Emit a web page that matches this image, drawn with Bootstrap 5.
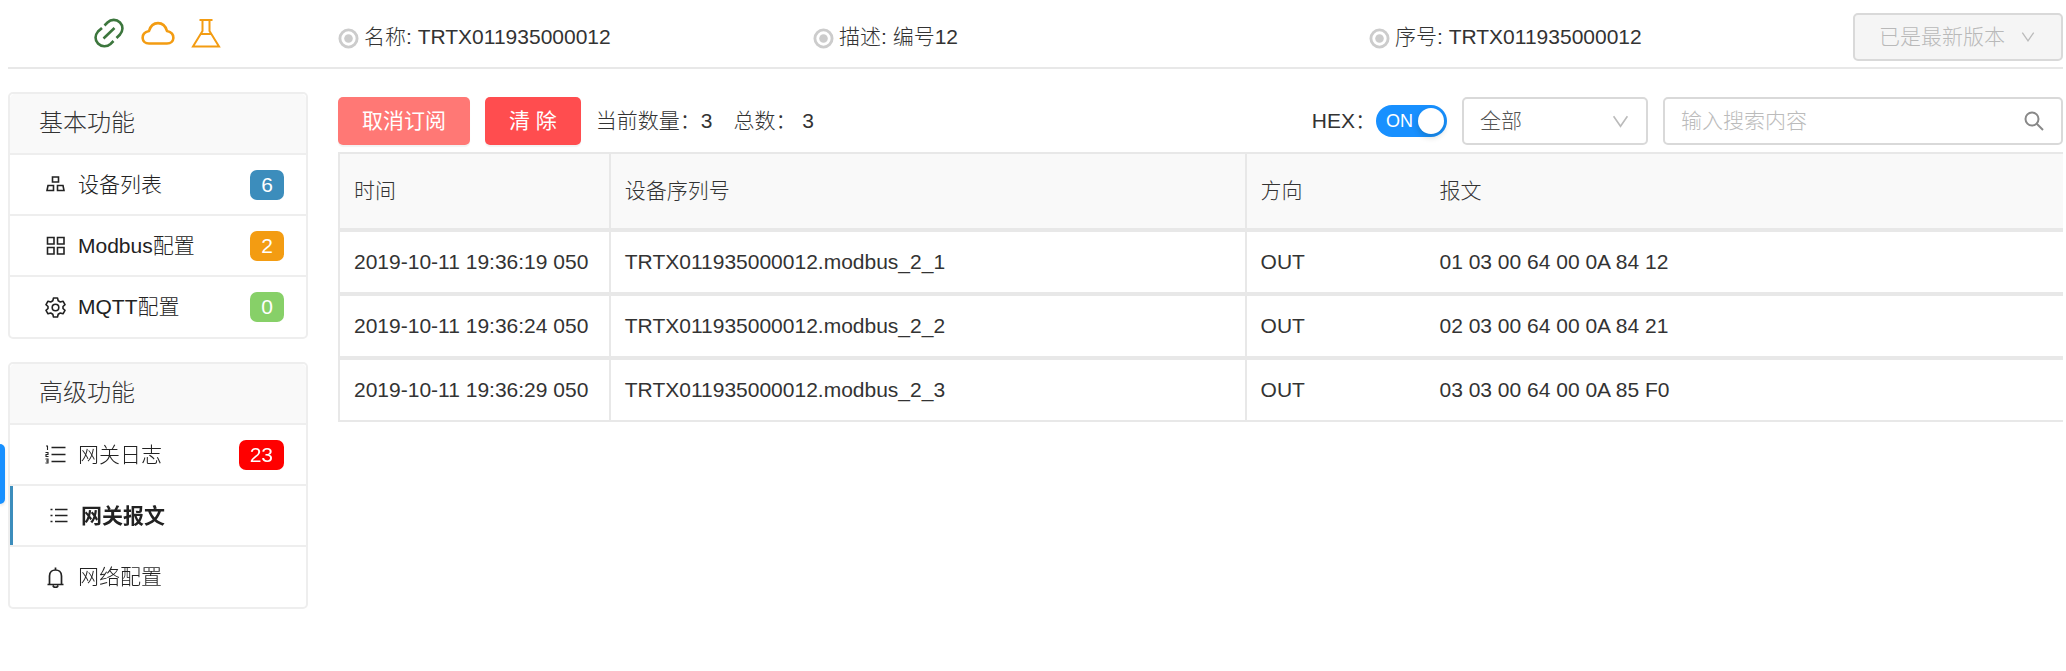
<!DOCTYPE html>
<html lang="zh-CN">
<head>
<meta charset="utf-8">
<meta name="viewport" content="width=device-width, initial-scale=1">
<title>网关报文</title>
<link href="https://cdn.jsdelivr.net/npm/bootstrap@5.3.0/dist/css/bootstrap.min.css" rel="stylesheet">
<style>
  body { font-family: "Liberation Sans", "Noto Sans CJK SC", sans-serif; font-size: 21px; font-weight: 300; line-height: 32px; color: #333; background: #fff; }
  .shell { padding: 0 3px 24px 8px; }
  .side { width: 300px; flex: none; }
  .topbar { height: 69px; border-bottom: 2px solid #e8e8e8; column-gap: 30px; }
  .status { gap: 16px; padding: 0 2px 2px 0; }
  .facts { display: grid; grid-template-columns: 475fr 556fr 694fr; padding-top: 7px; }
  .fact svg { margin: 3px 5px 0 0; }
  .workspace { column-gap: 30px; padding-top: 23px; }
  .btn { font-size: 21px; line-height: 32px; font-weight: 300; padding: 6px 22px; border: 2px solid transparent; border-radius: 5px; white-space: nowrap; }
  .btn-version, .btn-version:disabled { color: #b9b9b9; background: #f5f5f5; border-color: #d9d9d9; opacity: 1; padding: 6px 26px 6px 24px; height: 48px; }
  .btn-cancel, .btn-clear { color: #fff; height: 48px; font-weight: 400; box-shadow: 0 2px 1px rgba(0,0,0,.05); }
  .btn-cancel, .btn-cancel:hover { background: #ff7875; color: #fff; }
  .btn-clear, .btn-clear:hover { background: #ff4d4f; color: #fff; }
  .menu { --bs-card-border-color: #eee; --bs-card-border-width: 2px; --bs-card-border-radius: 5px; --bs-card-cap-bg: #f9f9f9; margin-bottom: 23px; overflow: hidden; }
  .menu .card-header { height: 61px; font-size: 24px; line-height: 32px; padding: 13px 29px; color: #333; }
  .menu .list-group-item { --bs-list-group-border-color: #eee; height: 61px; border-width: 0 0 2px; padding: 0 22px 0 35px; color: #222; display: flex; align-items: center; }
  .menu .list-group-item:last-child { border-bottom: 0; height: 60px; }
  .menu .list-group-item svg { margin-right: 12px; flex: none; }
  .menu .current { background: #fff; font-weight: 700; box-shadow: inset 3px 0 #3c8dbc; padding-left: 38px; }
  .count { min-width: 33px; height: 30px; border-radius: 7px; font-size: 21px; line-height: 30px; font-weight: 400; padding: 0 11px; text-align: center; color: #fff; }
  .c-blue { background: #3c8dbc; } .c-amber { background: #f39c12; } .c-green { background: #87d068; } .c-red { background: #f00; }
  .tools { height: 60px; padding-bottom: 3px; gap: 15px; }
  .tally { margin-right: 6px; }
  .switch-wrap { width: 71px; height: 32px; position: relative; }
  .switch-wrap .form-check-input { width: 71px; height: 32px; margin: 0; border: 0; border-radius: 16px; background: #bfbfbf; appearance: none; cursor: pointer; }
  .switch-wrap .form-check-input:checked { background: #1890ff; }
  .switch-wrap::after { content: ""; position: absolute; right: 3px; top: 3px; width: 26px; height: 26px; border-radius: 50%; background: #fff; box-shadow: 0 3px 6px rgba(0,35,11,.2); pointer-events: none; }
  .switch-wrap span { position: absolute; left: 10px; top: 0; line-height: 33px; font-size: 18px; color: #fff; pointer-events: none; }
  .picker { width: 186px; position: relative; }
  .finder { width: 400px; position: relative; }
  .picker select, .finder input { appearance: none; height: 48px; font-size: 21px; font-weight: 300; border: 2px solid #d9d9d9; border-radius: 5px; padding: 6px 16px; color: #555; background: #fff; }
  .finder input::placeholder { color: #bbb; }
  .picker svg { position: absolute; right: 19px; top: 16px; pointer-events: none; }
  .finder svg { position: absolute; right: 18px; top: 13px; }
  .log { border-collapse: separate; border-spacing: 0; table-layout: fixed; margin: 0; color: #333; border-left: 2px solid #e8e8e8; }
  .log th, .log td { padding: 0 14px; font-weight: 300; color: #333; border: 0 solid #e8e8e8; white-space: nowrap; vertical-align: middle; }
  .log thead th { height: 80px; background: #f9f9f9; border-width: 2px 0 4px; }
  .log tbody td { height: 64px; border-bottom-width: 4px; }
  .log tbody tr:last-child td { height: 62px; border-bottom-width: 2px; }
  .log .ruled { border-left-width: 2px; }
  .drawer-tab { position: fixed; left: 0; top: 444px; width: 5px; height: 60px; padding: 0; border: 0; background: #1890ff; border-radius: 0 5px 5px 0; box-shadow: 0 2px 3px rgba(0,0,0,.1); }
</style>
</head>
<body>
<svg width="0" height="0" class="position-absolute" aria-hidden="true">
  <symbol id="dot" viewBox="0 0 22 22"><circle cx="11" cy="11" r="9" fill="none" stroke="#ccc" stroke-width="3"/><circle cx="11" cy="11" r="4.5" fill="#ccc"/></symbol>
  <symbol id="down" viewBox="0 0 16 16"><path d="M1.5 3 8 12.5 14.500 3" fill="none" stroke="#bbb" stroke-width="1.5"/></symbol>
</svg>
<button class="drawer-tab" type="button" aria-label="展开"></button>
<div class="shell">
  <header class="topbar d-flex align-items-center">
    <div class="side status d-flex justify-content-center">
      <svg width="32" height="32" viewBox="0 0 32 32" fill="none" stroke="#3c763d" stroke-width="2.600"><path d="M11.500 8.500 14.500 5.500C18 2 23.500 2 27 5.500S30 14 27 17.500L23.500 21M20.500 24 17.500 27C14 30 8.500 30 5 26.500S2 18 5 14.500L9 11M10.500 21.500 21.500 11"/></svg>
      <svg width="34" height="32" viewBox="0 0 34 32" fill="none" stroke="#f39c12" stroke-width="2.600"><path d="M8 14C11 3.500 23 3.500 26 14C35 16 34 26.500 26 26.500H8C0 26.500-1 16 8 14Z"/></svg>
      <svg width="30" height="32" viewBox="0 0 30 32" fill="none" stroke="#f39c12" stroke-width="2"><path d="M8.500 3H21.500M11.500 3V14L2 29.500H28L18.500 14V3M9.500 17H20.500"/></svg>
    </div>
    <div class="facts flex-grow-1">
      <div class="fact d-flex align-items-center"><svg width="21" height="21"><use href="#dot"/></svg>名称: TRTX011935000012</div>
      <div class="fact d-flex align-items-center"><svg width="21" height="21"><use href="#dot"/></svg>描述: 编号12</div>
      <div class="d-flex align-items-center justify-content-between">
        <div class="fact d-flex align-items-center"><svg width="21" height="21"><use href="#dot"/></svg>序号: TRTX011935000012</div>
        <button class="btn btn-version d-flex align-items-center" type="button" disabled>已是最新版本<svg class="ms-3" width="14" height="14"><use href="#down"/></svg></button>
      </div>
    </div>
  </header>

  <div class="workspace d-flex align-items-start">
    <nav class="side">
      <div class="card menu">
        <div class="card-header">基本功能</div>
        <div class="list-group list-group-flush">
          <a href="#" class="list-group-item"><svg width="21" height="21" viewBox="0 0 21 21" fill="none" stroke="#222" stroke-width="1.600"><path d="M7.500 3H13.500V8H7.500ZM3 11.500H8.500V16.500H2L3 11.500ZM12.500 11.500H18L19 16.500H12.500Z"/></svg>设备列表<span class="count c-blue ms-auto">6</span></a>
          <a href="#" class="list-group-item"><svg width="21" height="21" viewBox="0 0 21 21" fill="none" stroke="#222" stroke-width="1.600"><path d="M2.500 2.500H9V9H2.500ZM12.500 2.500H19V9H12.500ZM2.500 12.500H9V19H2.500ZM12.500 12.500H19V19H12.500Z"/></svg>Modbus配置<span class="count c-amber ms-auto">2</span></a>
          <a href="#" class="list-group-item"><svg width="21" height="21" viewBox="0 0 21 21" fill="none" stroke="#222" stroke-width="1.600" stroke-linejoin="round"><path d="M8.500 1H12.500L13.200 3.800 15.300 5 18 4.200 20 7.700 18 9.500V11.500L20 13.300 18 16.800 15.300 16 13.200 17.200 12.500 20H8.500L7.800 17.200 5.700 16 3 16.800 1 13.300 3 11.500V9.500L1 7.700 3 4.200 5.700 5 7.800 3.800Z"/><circle cx="10.500" cy="10.500" r="3.300"/></svg>MQTT配置<span class="count c-green ms-auto">0</span></a>
        </div>
      </div>
      <div class="card menu">
        <div class="card-header">高级功能</div>
        <div class="list-group list-group-flush">
          <a href="#" class="list-group-item"><svg width="21" height="21" viewBox="0 0 21 21" fill="none" stroke="#222" stroke-width="1.700"><path d="M6.500 3.500H20.500M6.500 10.500H20.500M6.500 17.500H20.500"/><path stroke-width="1.100" d="M1 2H2.500V6M.5 8.500H3V10.500H1V12.500H3.500M.5 15H3V19H.5M1 17H3"/></svg>网关日志<span class="count c-red ms-auto">23</span></a>
          <a href="#" class="list-group-item current" aria-current="page"><svg width="21" height="21" viewBox="0 0 21 21" fill="none" stroke="#222" stroke-width="1.600"><path d="M7 4.500H19.500M7 10.500H19.500M7 16.500H19.500M2.500 4.500H4.500M2.500 10.500H4.500M2.500 16.500H4.500"/></svg>网关报文</a>
          <a href="#" class="list-group-item"><svg width="21" height="21" viewBox="0 0 21 21" fill="none" stroke="#222" stroke-width="1.700"><path d="M2.500 17.500H18.500M4.500 17.500V9C4.500 1 16.500 1 16.500 9V17.500M10.500 3V.5M8 18.500C8.500 21 12.500 21 13 18.500"/></svg>网络配置</a>
        </div>
      </div>
    </nav>

    <main class="flex-grow-1">
      <div class="tools d-flex align-items-center">
        <button class="btn btn-cancel" type="button">取消订阅</button>
        <button class="btn btn-clear" type="button">清 除</button>
        <span class="tally">当前数量：3</span><span class="tally">总数： 3</span>
        <div class="d-flex align-items-center ms-auto">
          <label for="hex">HEX：</label>
          <span class="switch-wrap form-check p-0 m-0"><input class="form-check-input" type="checkbox" role="switch" id="hex" checked><span>ON</span></span>
        </div>
        <div class="picker"><select class="w-100" aria-label="方向筛选"><option>全部</option></select><svg width="17" height="17"><use href="#down"/></svg></div>
        <div class="finder"><input class="w-100" type="search" placeholder="输入搜索内容" aria-label="搜索"><svg width="22" height="22" viewBox="0 0 22 22" fill="none" stroke="#888" stroke-width="2"><circle cx="9" cy="9" r="6.500"/><path d="M13.500 13.500 20 20"/></svg></div>
      </div>
      <table class="log w-100">
        <colgroup><col style="width:15.6%"><col style="width:36.9%"><col style="width:10.5%"><col></colgroup>
        <thead><tr><th scope="col">时间</th><th scope="col" class="ruled">设备序列号</th><th scope="col" class="ruled">方向</th><th scope="col">报文</th></tr></thead>
        <tbody>
          <tr><td>2019-10-11 19:36:19 050</td><td class="ruled">TRTX011935000012.modbus_2_1</td><td class="ruled">OUT</td><td>01 03 00 64 00 0A 84 12</td></tr>
          <tr><td>2019-10-11 19:36:24 050</td><td class="ruled">TRTX011935000012.modbus_2_2</td><td class="ruled">OUT</td><td>02 03 00 64 00 0A 84 21</td></tr>
          <tr><td>2019-10-11 19:36:29 050</td><td class="ruled">TRTX011935000012.modbus_2_3</td><td class="ruled">OUT</td><td>03 03 00 64 00 0A 85 F0</td></tr>
        </tbody>
      </table>
    </main>
  </div>
</div>
<script src="https://cdn.jsdelivr.net/npm/bootstrap@5.3.0/dist/js/bootstrap.bundle.min.js"></script>
</body>
</html>
